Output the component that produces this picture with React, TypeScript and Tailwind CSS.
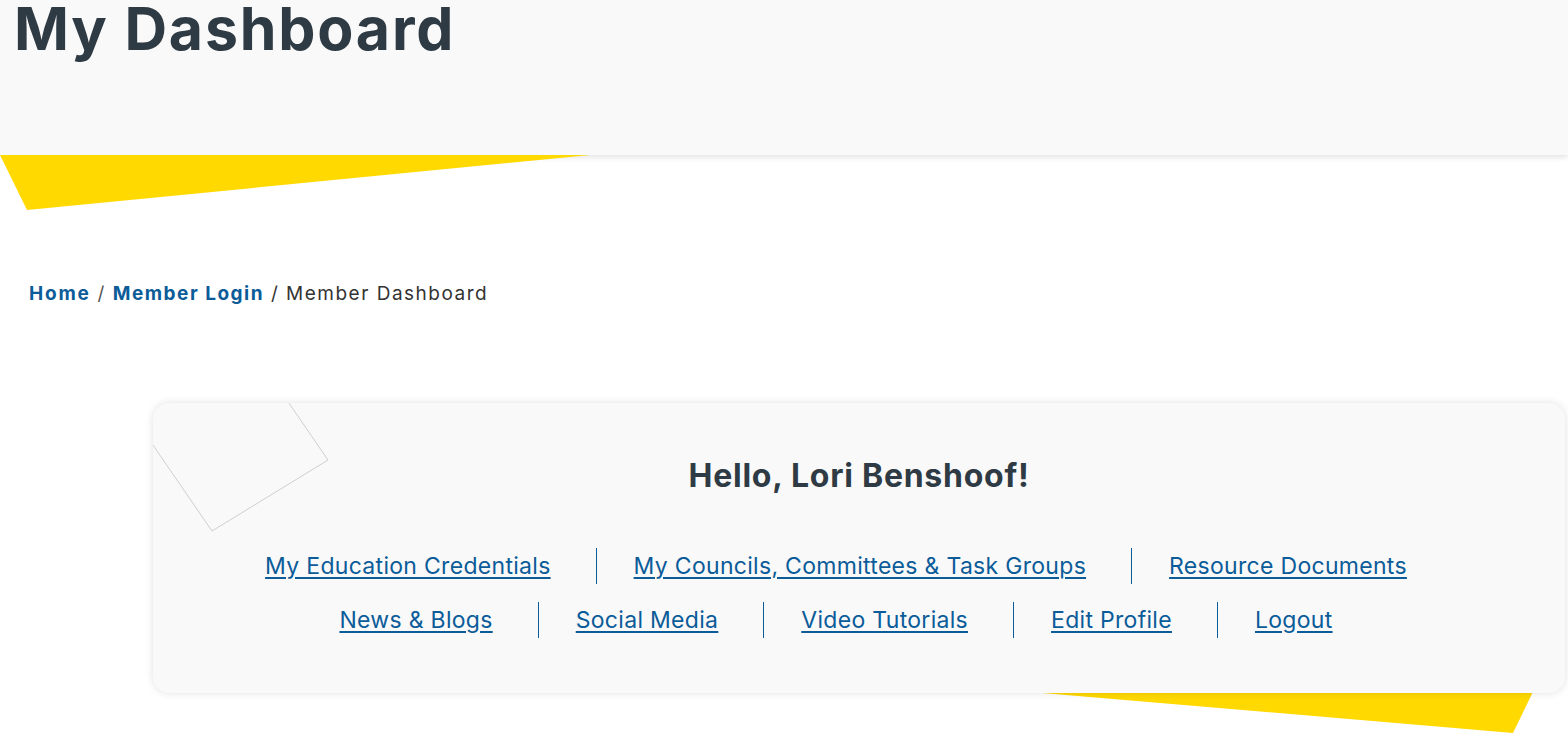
import React from 'react'

const rowOne = [
  'My Education Credentials',
  'My Councils, Committees & Task Groups',
  'Resource Documents',
]

const rowTwo = ['News & Blogs', 'Social Media', 'Video Tutorials', 'Edit Profile', 'Logout']

function LinkRow({ items }: { items: string[] }) {
  return (
    <ul className="flex justify-center">
      {items.map((label, i) => (
        <li
          key={label}
          className={
            'flex h-9 items-center pl-[37px] pr-[45px] ' +
            (i < items.length - 1 ? 'border-r border-[#0b5c99]' : '')
          }
        >
          <a
            href="#"
            className="text-[23px] leading-none tracking-[0.3px] text-[#0b5c99] underline decoration-[1.5px] underline-offset-[3px]"
          >
            {label}
          </a>
        </li>
      ))}
    </ul>
  )
}

export default function App() {
  return (
    <div
      className="relative min-h-screen overflow-hidden bg-white text-[#2f3b44]"
      style={{ fontFamily: 'Inter, "DejaVu Sans", sans-serif' }}
    >
      {/* page header */}
      <header className="relative h-[155px] bg-[#f9f9f9] shadow-[0_2px_6px_rgba(0,0,0,0.12)]">
        <h1 className="pl-[14px] pt-[0px] text-[59px] font-bold leading-[58px] tracking-[1.8px]">
          My Dashboard
        </h1>
      </header>
      <svg
        className="absolute left-0 top-[155px] z-10"
        width="600"
        height="60"
        viewBox="0 0 600 60"
      >
        <polygon points="0,0 590,0 27,55" fill="#ffd900" />
      </svg>

      {/* breadcrumb */}
      <nav className="mt-[127px] pl-[29px] text-[19px] leading-6 tracking-[1.5px]">
        <a href="#" className="font-bold tracking-[1.8px] text-[#0b5c99]">
          Home
        </a>
        <span className="text-[#555]"> / </span>
        <a href="#" className="font-bold text-[#0b5c99]">
          Member Login
        </a>
        <span className="text-[#333]"> / Member Dashboard</span>
      </nav>

      {/* dashboard card */}
      <section className="relative ml-[153px] mr-[3px] mt-[97px]">
        <svg
          className="absolute left-0 top-0"
          width="1412"
          height="330"
          viewBox="0 0 1412 330"
        >
          <polygon points="560,262 1393,262 1360,330" fill="#ffd900" />
        </svg>
        <div className="relative h-[290px] overflow-hidden rounded-2xl bg-[#f9f9f9] shadow-[0_0_8px_rgba(0,0,0,0.12)]">
          <svg className="absolute left-0 top-0" width="200" height="140" viewBox="0 0 200 140">
            <polyline
              points="116,-29 175,57 59,128 -20,13"
              fill="none"
              stroke="#cfcfcf"
              strokeWidth="1"
            />
          </svg>
          <div className="relative pt-[53px]">
            <h2 className="text-center text-[32px] font-bold leading-10 tracking-[0.75px]">
              Hello, Lori Benshoof!
            </h2>
            <div className="mt-[52px] flex flex-col gap-[18px] pr-[38px]">
              <LinkRow items={rowOne} />
              <LinkRow items={rowTwo} />
            </div>
          </div>
        </div>
      </section>
    </div>
  )
}
